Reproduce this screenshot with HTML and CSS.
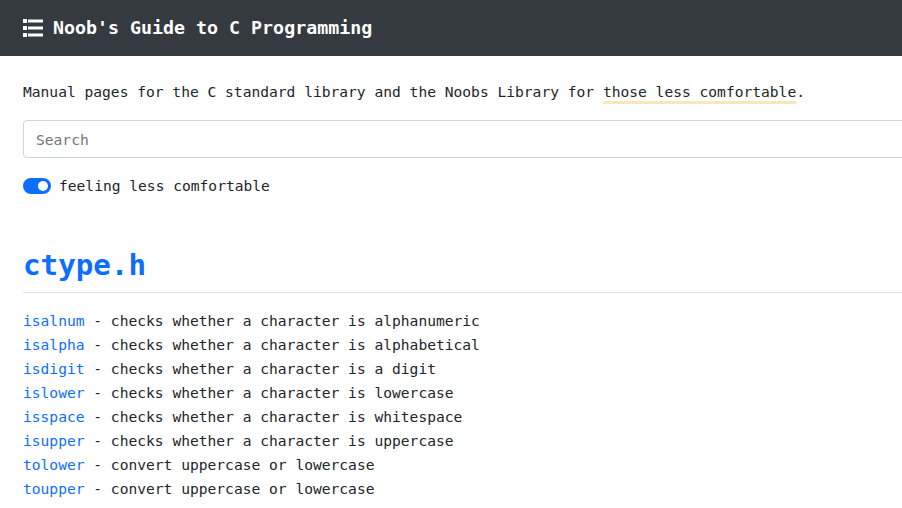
FILE: index.html
```html
<!DOCTYPE html>
<html lang="en">
<head>
<meta charset="utf-8">
<title>Noob's Guide to C Programming</title>
<link rel="stylesheet" href="styles.css">
</head>
<body>
<nav class="navbar">
  <svg class="nav-icon" width="20" height="18" viewBox="0 0 20 18" aria-hidden="true">
    <rect x="0" y="0" width="4" height="4" fill="#fff"/>
    <rect x="5" y="0.5" width="15" height="3" fill="#fff"/>
    <rect x="0" y="7" width="4" height="4" fill="#fff"/>
    <rect x="5" y="7.5" width="15" height="3" fill="#fff"/>
    <rect x="0" y="14" width="4" height="4" fill="#fff"/>
    <rect x="5" y="14.5" width="15" height="3" fill="#fff"/>
  </svg>
  <span class="brand">Noob's Guide to C Programming</span>
</nav>
<main class="container">
  <p class="intro">Manual pages for the C standard library and the Noobs Library for <span class="mark">those less comfortable</span>.</p>
  <input class="search" type="text" placeholder="Search">
  <label class="switch">
    <span class="toggle"><span class="knob"></span></span>
    <span>feeling less comfortable</span>
  </label>
  <h2 class="header">ctype.h</h2>
  <ul class="funcs">
    <li><a href="#">isalnum</a> - checks whether a character is alphanumeric</li>
    <li><a href="#">isalpha</a> - checks whether a character is alphabetical</li>
    <li><a href="#">isdigit</a> - checks whether a character is a digit</li>
    <li><a href="#">islower</a> - checks whether a character is lowercase</li>
    <li><a href="#">isspace</a> - checks whether a character is whitespace</li>
    <li><a href="#">isupper</a> - checks whether a character is uppercase</li>
    <li><a href="#">tolower</a> - convert uppercase or lowercase</li>
    <li><a href="#">toupper</a> - convert uppercase or lowercase</li>
  </ul>
</main>
</body>
</html>
```
FILE: styles.css
```css
html, body {
  margin: 0;
  padding: 0;
  overflow: hidden;
  background: #fff;
}
body {
  font-family: "DejaVu Sans Mono", "Liberation Mono", monospace;
  font-size: 14.6px;
  line-height: 24px;
  color: #212529;
}
.navbar {
  height: 56px;
  background: #343a40;
  display: flex;
  align-items: center;
  padding-left: 23px;
  gap: 10px;
}
.nav-icon {
  display: block;
  flex: none;
}
.brand {
  color: #fff;
  font-weight: bold;
  font-size: 18.3px;
  line-height: 24px;
}
.container {
  width: 1100px;
  padding: 24px 0 0 23px;
  display: flex;
  flex-direction: column;
  align-items: flex-start;
}
.intro {
  margin: 0 0 16px;
}
.mark {
  text-decoration: underline;
  text-decoration-color: #f8e8b6;
  text-decoration-thickness: 3px;
  text-underline-offset: 4px;
}
.search {
  box-sizing: border-box;
  width: 100%;
  height: 38px;
  border: 1px solid #ced4da;
  border-radius: 4px;
  padding: 0 12px;
  font-family: inherit;
  font-size: 14.6px;
  color: #212529;
  margin: 0 0 16px;
}
.search::placeholder {
  color: #6c757d;
}
.switch {
  display: flex;
  align-items: center;
  gap: 8px;
  height: 24px;
}
.toggle {
  box-sizing: border-box;
  width: 28px;
  height: 16px;
  border-radius: 8px;
  background: #0d6efd;
  display: flex;
  align-items: center;
  justify-content: flex-end;
  padding-right: 3px;
}
.knob {
  width: 10px;
  height: 10px;
  border-radius: 50%;
  background: #fff;
}
.header {
  align-self: stretch;
  margin: 50px 0 16px;
  padding-bottom: 9px;
  border-bottom: 1px solid #dee2e6;
  font-size: 29.2px;
  line-height: 35px;
  font-weight: bold;
  color: #0d6efd;
}
.funcs {
  list-style: none;
  margin: 0;
  padding: 0;
}
.funcs li {
  line-height: 24px;
}
.funcs a {
  color: #0d6efd;
  text-decoration: none;
}
```
